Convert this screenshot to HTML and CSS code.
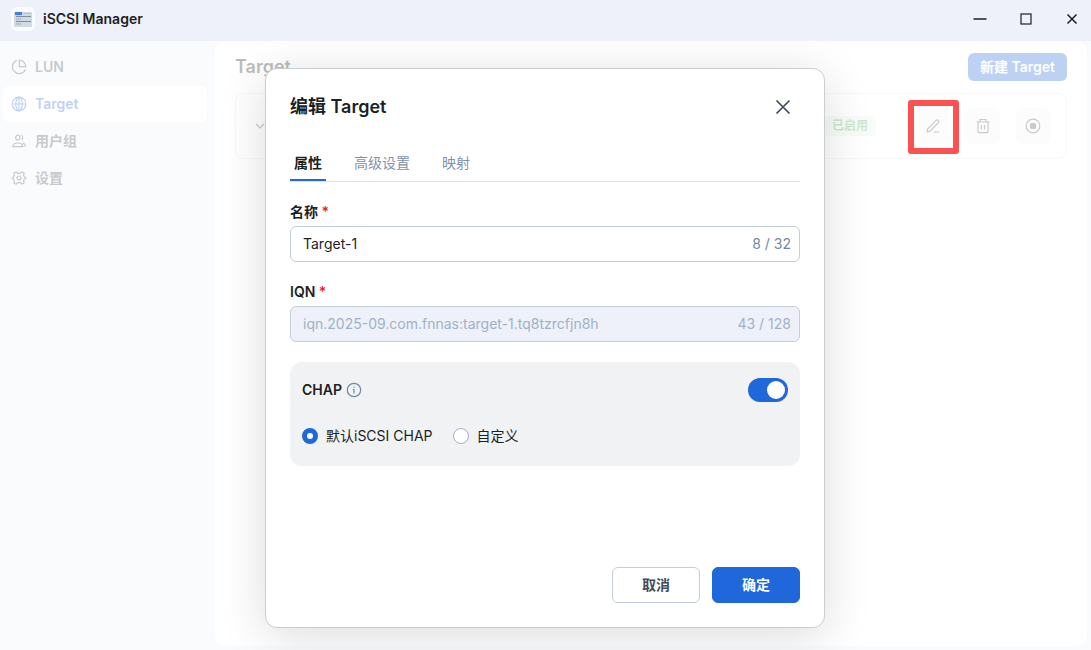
FILE: index.html
```html
<!DOCTYPE html>
<html lang="zh-CN">
<head>
    <meta charset="UTF-8">
    <title>iSCSI Manager</title>
    <link rel="stylesheet" href="styles.css">
</head>
<body>
    <header class="titlebar">
        <div class="app-icon">
            <svg width="18" height="16" viewBox="0 0 18 16">
                <rect x="0" y="1" width="18" height="15" rx="1" fill="#cfdae4"/>
                <rect x="1" y="1" width="7" height="3" fill="#3f7bf5"/>
                <path d="M9 2.500h8" stroke="#b9c5d0" stroke-width="1"/>
                <path d="M2 5.500h15M2 10.500h15" stroke="#7f8d9b" stroke-width="1"/>
                <path d="M2 8h5M2 13h5" stroke="#aab5c0" stroke-width="1.500" stroke-dasharray="1.500 .5"/>
            </svg>
        </div>
        <span class="app-name">iSCSI Manager</span>
        <div class="window-controls">
            <button class="window-button" aria-label="最小化">
                <svg width="14" height="14" viewBox="0 0 14 14"><path d="M.5 7h13" stroke-width="1.500"/></svg>
            </button>
            <button class="window-button" aria-label="最大化">
                <svg width="14" height="14" viewBox="0 0 14 14"><rect x="2" y="2" width="10" height="10" stroke-width="1.200"/></svg>
            </button>
            <button class="window-button" aria-label="关闭窗口">
                <svg width="14" height="14" viewBox="0 0 14 14"><path d="M2.500 2.500l9 9M11.500 2.500l-9 9" stroke-width="1.500"/></svg>
            </button>
        </div>
    </header>

    <div class="workspace">
        <nav class="sidebar">
            <a class="nav-item" href="#lun">
                <svg width="16" height="16" viewBox="0 0 16 16"><path d="M5.800 1.400a6.800 6.800 0 1 0 8.800 8.800"/><path d="M8.300 1.200v6.500h6.500A6.500 6.500 0 0 0 8.300 1.200z"/></svg>
                LUN
            </a>
            <a class="nav-item active" href="#target">
                <svg width="16" height="16" viewBox="0 0 16 16"><circle cx="8" cy="8" r="6.800"/><ellipse cx="8" cy="8" rx="3.200" ry="6.800"/><path d="M1.200 8h13.600M8 1.200v13.600"/></svg>
                Target
            </a>
            <a class="nav-item" href="#groups">
                <svg width="16" height="16" viewBox="0 0 16 16"><ellipse cx="6.800" cy="4.600" rx="2.100" ry="2.600"/><path d="M10.500 2.200c1.600.8 1.600 4 0 4.800"/><path d="M1.700 13.600c.4-4.800 9.800-4.800 10.200 0zM11.500 9.800c1.800.6 2.800 2 3 4"/></svg>
                用户组
            </a>
            <a class="nav-item" href="#settings">
                <svg width="16" height="16" viewBox="0 0 16 16"><circle cx="8" cy="8" r="2"/><path d="M5.200 1.800L6.600 3.300h2.800l1.400-1.500 2.400 1.400-.6 2 1.400 2.300 1.100.5-1.100.5-1.400 2.300.6 2-2.400 1.400-1.400-1.500H6.600l-1.400 1.500-2.400-1.400.6-2L2 8.500.9 8l1.100-.5 1.400-2.300-.6-2z" stroke-linejoin="round"/></svg>
                设置
            </a>
        </nav>

        <main class="content">
            <div class="content-header">
                <h1>Target</h1>
                <button class="create-button">新建 Target</button>
            </div>
            <div class="target-card">
                <button class="expand-button" aria-label="展开">
                    <svg width="10" height="10" viewBox="0 0 10 10"><path d="M1 3l4 4 4-4"/></svg>
                </button>
                <span class="status">已启用</span>
                <div class="actions">
                    <div class="action-highlight">
                        <button class="action-button" aria-label="编辑">
                            <svg width="16" height="16" viewBox="0 0 16 16"><path d="M2 14l.7-3.200 8.600-8.600c1.500-1.200 3.500.8 2.300 2.300L5 13.200zM8.500 14h6" stroke-linejoin="round"/></svg>
                        </button>
                    </div>
                    <button class="action-button" aria-label="删除">
                        <svg width="16" height="16" viewBox="0 0 16 16"><path d="M1.500 4h13M5 4V1.500h6V4M3 4v9.500c0 .8.500 1.200 1.200 1.200h7.600c.7 0 1.200-.4 1.200-1.200V4M6.500 7v4.500M9.500 7v4.500"/></svg>
                    </button>
                    <button class="action-button" aria-label="停用">
                        <svg width="16" height="16" viewBox="0 0 16 16"><circle cx="8" cy="8" r="6.800"/><rect x="5.500" y="5.500" width="5" height="5" rx="1.500" fill="currentColor"/></svg>
                    </button>
                </div>
            </div>
        </main>

        <div class="mask">
            <form class="dialog" role="dialog" aria-labelledby="dialogTitle">
                <div class="dialog-header">
                    <h2 id="dialogTitle">编辑 Target</h2>
                    <button type="button" class="close-button" aria-label="关闭">
                        <svg width="16" height="16" viewBox="0 0 16 16"><path d="M1.500 1.500l13 13M14.500 1.500l-13 13"/></svg>
                    </button>
                </div>

                <div class="tabs" role="tablist">
                    <button type="button" class="tab selected" role="tab">属性</button>
                    <button type="button" class="tab" role="tab">高级设置</button>
                    <button type="button" class="tab" role="tab">映射</button>
                </div>

                <div class="field">
                    <label for="name">名称 <span class="required">*</span></label>
                    <div class="input-box">
                        <input type="text" id="name" value="Target-1" maxlength="32">
                        <span class="counter">8 / 32</span>
                    </div>
                </div>

                <div class="field">
                    <label for="iqn">IQN <span class="required">*</span></label>
                    <div class="input-box disabled">
                        <input type="text" id="iqn" value="iqn.2025-09.com.fnnas:target-1.tq8tzrcfjn8h" maxlength="128" disabled>
                        <span class="counter">43 / 128</span>
                    </div>
                </div>

                <div class="chap">
                    <div class="chap-header">
                        <label for="chap">CHAP</label>
                        <svg width="16" height="16" viewBox="0 0 16 16"><circle cx="8" cy="8" r="6.700"/><path d="M8 7.200v4.300M8 4.500v1.300M6.800 7.500H8"/></svg>
                        <input type="checkbox" id="chap" class="switch" checked>
                    </div>
                    <div class="chap-options">
                        <label><input type="radio" name="chapMode" checked>默认iSCSI CHAP</label>
                        <label><input type="radio" name="chapMode">自定义</label>
                    </div>
                </div>

                <div class="dialog-footer">
                    <button type="button" class="button">取消</button>
                    <button type="button" class="button primary">确定</button>
                </div>
            </form>
        </div>
    </div>
</body>
</html>
```
FILE: styles.css
```css
* {
    box-sizing: border-box;
}
body {
    margin: 0;
    min-height: 100vh;
    display: flex;
    flex-direction: column;
    font-family: Inter, "Noto Sans CJK SC", sans-serif;
    font-size: 14px;
    line-height: 20px;
    color: #1c1f23;
    background-color: #eef1f9;
}
button, input {
    font: inherit;
    color: inherit;
}
button {
    display: flex;
    align-items: center;
    justify-content: center;
    padding: 0;
    border: none;
    background: none;
    cursor: pointer;
}
svg {
    flex: none;
    fill: none;
    stroke: currentColor;
    stroke-width: 1.2;
}
h1, h2 {
    margin: 0;
    font-size: 18px;
    line-height: 28px;
    font-weight: 600;
}

/* Title bar */
.titlebar {
    display: flex;
    align-items: center;
    gap: 8px;
    height: 41px;
    padding: 0 0 3px 11px;
}
.app-icon {
    display: flex;
    align-items: center;
    justify-content: center;
    width: 24px;
    height: 24px;
    border-radius: 6px;
    background-color: #f8fbff;
}
.app-icon svg {
    stroke: none;
}
.app-name {
    font-weight: 600;
}
.window-controls {
    display: flex;
    gap: 8px;
    margin-left: auto;
}
.window-button {
    width: 38px;
    height: 38px;
}

/* Workspace */
.workspace {
    position: relative;
    flex: 1;
    display: flex;
    overflow: hidden;
}
.sidebar {
    display: flex;
    flex-direction: column;
    gap: 1px;
    width: 215px;
    padding: 8px 8px 8px 3px;
}
.nav-item {
    display: flex;
    align-items: center;
    gap: 8px;
    height: 36px;
    padding: 0 8px;
    border-radius: 6px;
    font-weight: 600;
    color: #484b53;
    text-decoration: none;
}
.nav-item.active {
    background-color: #fff;
    color: #1f67da;
}
.content {
    flex: 1;
    margin: 0 4px 4px 0;
    padding: 12px 20px;
    border-radius: 10px;
    background-color: #fff;
}
.content-header {
    display: flex;
    align-items: center;
    justify-content: space-between;
    margin-bottom: 12px;
}
.create-button {
    height: 28px;
    padding: 0 12px;
    border-radius: 6px;
    background-color: #1f67da;
    color: #fff;
    font-weight: 600;
}
.target-card {
    display: flex;
    align-items: center;
    height: 66px;
    padding: 0 16px;
    border: 1px solid #e3e6ea;
    border-radius: 8px;
}
.expand-button {
    width: 16px;
    height: 16px;
    color: #484b53;
}
.status {
    margin-left: auto;
    margin-right: 40px;
    padding: 0 8px;
    border-radius: 4px;
    background-color: #e8f6e9;
    color: #62b060;
    font-size: 12px;
    font-weight: 600;
}
.actions {
    display: flex;
    gap: 16px;
}
.action-button {
    width: 34px;
    height: 36px;
    border-radius: 6px;
    background-color: #f3f6f5;
    color: #484b53;
}
.action-highlight {
    position: relative;
}
.action-highlight::after {
    content: "";
    position: absolute;
    inset: -8px -9px -10px -8px;
    z-index: 2;
    border: 6px solid #fb5151;
    border-radius: 3px;
    pointer-events: none;
}

/* Dialog */
.mask {
    position: absolute;
    inset: 0;
    z-index: 1;
    display: flex;
    align-items: flex-start;
    justify-content: center;
    padding: 27px 1px 0 0;
    background-color: rgba(255, 255, 255, 0.7);
}
.dialog {
    display: flex;
    flex-direction: column;
    width: 560px;
    max-width: 100%;
    min-height: 560px;
    padding: 24px;
    border: 1px solid #cccdd0;
    border-radius: 12px;
    background-color: #fff;
    box-shadow: 0 8px 48px rgba(0, 0, 0, 0.14);
}
.dialog-header {
    display: flex;
    align-items: center;
    justify-content: space-between;
    margin-bottom: 24px;
}
.close-button {
    width: 34px;
    height: 28px;
    color: #414b5e;
}
.close-button svg {
    stroke-width: 1.7;
}
.tabs {
    display: flex;
    gap: 24px;
    margin-bottom: 20px;
    border-bottom: 1px solid #dfe4ec;
}
.tab {
    height: 36px;
    padding: 2px 4px 0;
    border-bottom: 2px solid transparent;
    color: #7f91ae;
}
.tab.selected {
    border-color: #1f67da;
    color: #1c1f23;
    font-weight: 600;
}
.field {
    display: flex;
    flex-direction: column;
    gap: 4px;
    margin-bottom: 20px;
}
.field label {
    height: 20px;
    font-weight: 600;
}
.required {
    color: #f5142b;
}
.input-box {
    display: flex;
    align-items: center;
    gap: 12px;
    height: 36px;
    padding: 0 8px 0 12px;
    border: 1px solid #c2cedd;
    border-radius: 6px;
}
.input-box input {
    flex: 1;
    min-width: 0;
    padding: 0;
    border: none;
    outline: none;
    background: none;
}
.counter {
    color: #7587a3;
}
.input-box.disabled {
    background-color: #eef1f9;
    color: #a0b1c7;
}
.disabled .counter {
    color: #a0b1c7;
}
.chap {
    padding: 16px 12px 20px;
    border-radius: 12px;
    background-color: #f1f2f4;
}
.chap-header {
    display: flex;
    align-items: center;
    gap: 4px;
    margin-bottom: 24px;
}
.chap-header label {
    font-weight: 600;
}
.chap-header svg {
    color: #7587a3;
}
.switch {
    appearance: none;
    display: flex;
    align-items: center;
    width: 40px;
    height: 24px;
    margin: 0 0 0 auto;
    padding: 0 3px;
    border-radius: 12px;
    background-color: #a0b1c7;
}
.switch::before {
    content: "";
    width: 18px;
    height: 18px;
    border-radius: 50%;
    background-color: #fff;
}
.switch:checked {
    justify-content: flex-end;
    background-color: #1f67da;
}
.chap-options {
    display: flex;
    gap: 20px;
}
.chap-options label {
    display: flex;
    align-items: center;
    gap: 8px;
    height: 20px;
}
.chap-options input {
    appearance: none;
    width: 16px;
    height: 16px;
    margin: 0;
    border: 1px solid #a0b1c7;
    border-radius: 50%;
    background-color: #fff;
}
.chap-options input:checked {
    border: 5px solid #1f67da;
}
.dialog-footer {
    display: flex;
    justify-content: flex-end;
    gap: 12px;
    margin-top: auto;
}
.button {
    width: 88px;
    height: 36px;
    border: 1px solid #c2cedd;
    border-radius: 6px;
    color: #414b5e;
    font-weight: 600;
}
.button.primary {
    border-color: #1f67da;
    background-color: #1f67da;
    color: #fff;
}
```
